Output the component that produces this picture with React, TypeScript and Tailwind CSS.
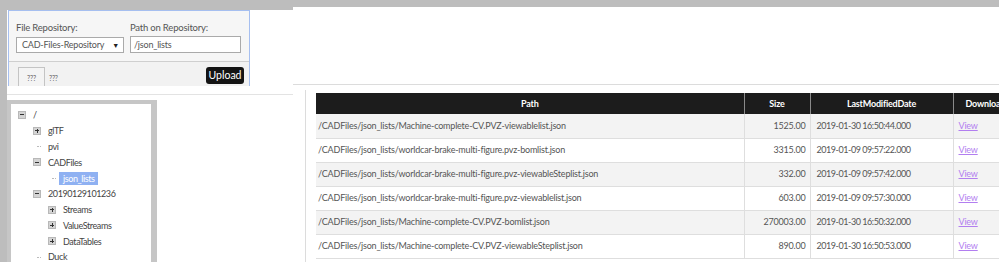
import React from "react";

const ROWS = [
  { path: "/CADFiles/json_lists/Machine-complete-CV.PVZ-viewablelist.json", size: "1525.00", date: "2019-01-30 16:50:44.000" },
  { path: "/CADFiles/json_lists/worldcar-brake-multi-figure.pvz-bomlist.json", size: "3315.00", date: "2019-01-09 09:57:22.000" },
  { path: "/CADFiles/json_lists/worldcar-brake-multi-figure.pvz-viewableSteplist.json", size: "332.00", date: "2019-01-09 09:57:42.000" },
  { path: "/CADFiles/json_lists/worldcar-brake-multi-figure.pvz-viewablelist.json", size: "603.00", date: "2019-01-09 09:57:30.000" },
  { path: "/CADFiles/json_lists/Machine-complete-CV.PVZ-bomlist.json", size: "270003.00", date: "2019-01-30 16:50:32.000" },
  { path: "/CADFiles/json_lists/Machine-complete-CV.PVZ-viewableSteplist.json", size: "890.00", date: "2019-01-30 16:50:53.000" },
];

type Node = { label: string; level: number; kind: "open" | "closed" | "leaf"; selected?: boolean };

const TREE: Node[] = [
  { label: "/", level: 0, kind: "open" },
  { label: "glTF", level: 1, kind: "closed" },
  { label: "pvi", level: 1, kind: "leaf" },
  { label: "CADFiles", level: 1, kind: "open" },
  { label: "json_lists", level: 2, kind: "leaf", selected: true },
  { label: "20190129101236", level: 1, kind: "open" },
  { label: "Streams", level: 2, kind: "closed" },
  { label: "ValueStreams", level: 2, kind: "closed" },
  { label: "DataTables", level: 2, kind: "closed" },
  { label: "Duck", level: 1, kind: "leaf" },
];

function Toggle({ open }: { open: boolean }) {
  return (
    <span className="relative w-[8px] h-[8px] bg-[#d4d4d4] border border-[#b8b8b8] shrink-0">
      <span className="absolute left-[1px] top-[2.5px] w-[4px] h-[1px] bg-[#333]" />
      {!open && <span className="absolute left-[2.5px] top-[1px] w-[1px] h-[4px] bg-[#333]" />}
    </span>
  );
}

function TreeRow({ node }: { node: Node }) {
  const indent = node.level * 15;
  return (
    <div className="flex items-center h-[15.8px]" style={{ paddingLeft: indent + 7 }}>
      {node.kind === "leaf" ? (
        <span className="w-[8px] h-[8px] shrink-0 flex items-center">
          <span className="w-full border-t border-dotted border-[#bbb] ml-[4px]" />
        </span>
      ) : (
        <Toggle open={node.kind === "open"} />
      )}
      {node.selected ? (
        <span className="ml-[3px] pl-[4px] pr-[3px] bg-[#8fb1f2] text-white leading-[13px]">{node.label}</span>
      ) : (
        <span className="ml-[7px] text-[#444]">{node.label}</span>
      )}
    </div>
  );
}

export default function App() {
  return (
    <div
      className="w-[999px] h-[262px] overflow-hidden bg-white flex flex-col text-[9px] tracking-[-0.2px] text-[#555]"
      style={{ fontFamily: 'Lato, "Open Sans", sans-serif' }}
    >
      <div className="h-[7px] bg-[#bdbdbd] shrink-0" />
      <div className="flex flex-1 min-h-0">
        <div className="w-[7px] bg-[#bdbdbd] shrink-0" />

        {/* left column */}
        <div className="w-[286px] shrink-0 flex flex-col">
          <div className="h-[3px] bg-[#bdbdbd]" />
          <div className="ml-[1px] w-[242px] h-[76px] border border-b-0 border-[#a6bff0] bg-[#f6f6f6] overflow-hidden">
            <div className="flex gap-[6px] px-[7px] pt-[10px] h-[50px] text-[9.5px]">
              <div className="flex flex-col">
                <label className="h-[16px] leading-[14px]">File Repository:</label>
                <div className="w-[108px] h-[16px] bg-white border border-[#aaa] flex items-center justify-between pl-[5px] pr-[4px] whitespace-nowrap text-[9px]">
                  <span>CAD-Files-Repository</span>
                  <span className="text-[7px] text-[#222]">▼</span>
                </div>
              </div>
              <div className="flex flex-col">
                <label className="h-[15px] leading-[14px]">Path on Repository:</label>
                <div className="w-[111px] h-[17px] bg-white border border-[#aaa] flex items-center pl-[3px] text-[9px]">
                  /json_lists
                </div>
              </div>
            </div>
            <div className="border-t border-[#cfcfcf] bg-[#f2f2f2] h-[30px] flex items-start pt-[5px] pl-[9px] pr-[5px]">
              <div className="w-[27px] h-[22px] bg-[#f4f4f4] border border-[#c4c4c4] flex items-center justify-center text-[7px] text-[#666]">
                ???
              </div>
              <span className="ml-[4px] mt-[6px] text-[7px] text-[#666]">???</span>
              <button className="ml-auto w-[38px] h-[17px] rounded-[3px] bg-[#141414] text-white text-[10.5px] leading-[17px] tracking-normal">
                Upload
              </button>
            </div>
          </div>
          <div className="h-[9px] border-b border-[#e3e3e3]" />
          <div className="pt-[5px] flex-1 min-h-0">
            <div className="w-[150px] h-full border-4 border-r-[6px] border-b-0 border-[#c6c6c6] pt-[3px] tracking-[-0.4px]">
              {TREE.map((n) => (
                <TreeRow key={n.label} node={n} />
              ))}
            </div>
          </div>
        </div>

        {/* right column */}
        <div className="flex-1 min-w-0 flex flex-col">
          <div className="h-[78px] border-b border-[#dcdcdc] shrink-0" />
          <div className="ml-[12px] mt-[5px] flex-1 border-l border-[#dcdcdc] pl-[10px] pt-[3px] overflow-hidden">
            <table className="border-collapse table-fixed w-[720px]">
              <colgroup>
                <col className="w-[428px]" />
                <col className="w-[66px]" />
                <col className="w-[143px]" />
                <col className="w-[83px]" />
              </colgroup>
              <thead>
                <tr className="h-[21px] bg-[#1c1c1c] text-white font-bold">
                  <th className="text-center">Path</th>
                  <th className="text-center border-l border-[#8a8a8a]">Size</th>
                  <th className="text-center border-l border-[#8a8a8a]">LastModifiedDate</th>
                  <th className="text-left pl-[12px] border-l border-[#8a8a8a] whitespace-nowrap">Download</th>
                </tr>
              </thead>
              <tbody>
                {ROWS.map((r, i) => (
                  <tr key={r.path} className={`h-[24px] border-b border-[#dedede] ${i % 2 === 0 ? "bg-[#f3f3f3]" : "bg-white"}`}>
                    <td className="pl-[2px] whitespace-nowrap">{r.path}</td>
                    <td className="text-right pr-[4px] border-l border-[#dedede]">{r.size}</td>
                    <td className="pl-[6px] border-l border-[#dedede] whitespace-nowrap tracking-[-0.45px]">{r.date}</td>
                    <td className="pl-[5px] border-l border-[#dedede]">
                      <a className="text-[#b27ef0] underline">View</a>
                    </td>
                  </tr>
                ))}
              </tbody>
            </table>
          </div>
        </div>
      </div>
    </div>
  );
}
